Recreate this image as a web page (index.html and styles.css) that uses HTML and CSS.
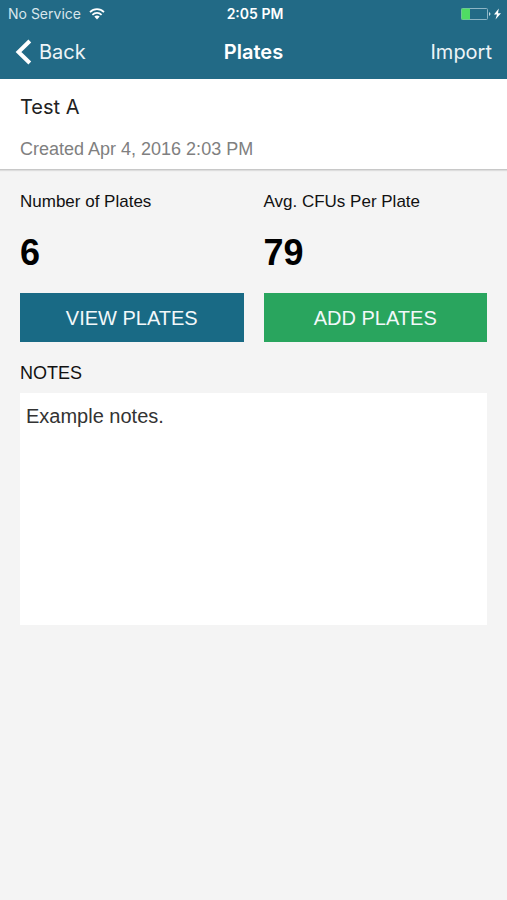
FILE: index.html
```html
<!DOCTYPE html>
<html lang="en">
<head>
    <meta charset="UTF-8">
    <meta name="viewport" content="width=device-width, initial-scale=1.0">
    <title>Plates</title>
    <link rel="stylesheet" href="styles.css">
</head>
<body>
    <header class="header">
        <!-- Status bar -->
        <div class="status-bar">
            <div class="status-left">
                <span>No Service</span>
                <svg class="wifi" width="16" height="12" viewBox="0 0 16 12" aria-hidden="true">
                    <path d="M1 4.2C5 .2 11 .2 15 4.2" fill="none" stroke="#fff" stroke-width="1.7"/>
                    <path d="M3.4 6.8C6 4.2 10 4.2 12.6 6.8" fill="none" stroke="#fff" stroke-width="1.7"/>
                    <path d="M5.3 8.6Q8 6.2 10.7 8.6L8 11.4Z" fill="#fff"/>
                </svg>
            </div>
            <div class="status-time">2:05 PM</div>
            <div class="status-right">
                <svg width="42" height="14" viewBox="0 0 42 14" aria-hidden="true">
                    <rect x="1.5" y="1.5" width="26" height="11" rx="1" fill="none" stroke="#8db5c5"/>
                    <rect x="1.5" y="1.5" width="8.5" height="11" fill="#4fdc63"/>
                    <path d="M29 5Q32 7 29 9Z" fill="#c5dbe3"/>
                    <path d="M38.8 1.5L34 7.6H37L35.5 12.5L41 6.2H38Z" fill="#fff"/>
                </svg>
            </div>
        </div>

        <!-- Navigation -->
        <nav class="nav-bar">
            <a href="#" class="nav-link">
                <svg width="17" height="26" viewBox="0 0 17 26" aria-hidden="true">
                    <path d="M14.8 2L3.5 13L14.8 24" fill="none" stroke="#fff" stroke-width="4"/>
                </svg>
                <span>Back</span>
            </a>
            <h1>Plates</h1>
            <a href="#" class="nav-link nav-import">Import</a>
        </nav>
    </header>

    <section class="test-info">
        <h2>Test A</h2>
        <p>Created Apr 4, 2016 2:03 PM</p>
    </section>

    <main class="content">
        <div class="stats">
            <div class="stat">
                <div class="stat-label">Number of Plates</div>
                <div class="stat-value">6</div>
                <button type="button" class="btn btn-view">VIEW PLATES</button>
            </div>
            <div class="stat">
                <div class="stat-label">Avg. CFUs Per Plate</div>
                <div class="stat-value">79</div>
                <button type="button" class="btn btn-add">ADD PLATES</button>
            </div>
        </div>

        <label for="notes">NOTES</label>
        <textarea id="notes" name="notes">Example notes.</textarea>
    </main>
</body>
</html>
```

FILE: styles.css
```css
body {
    font-family: "Liberation Sans", Arial, sans-serif;
    background-color: #f4f4f4;
    color: #111;
    margin: 0;
}
h1, h2, p {
    margin: 0;
}
.header {
    background-color: #226a86;
    color: #fff;
    font-family: Inter, sans-serif;
    padding-bottom: 3px;
}
.status-bar, .nav-bar {
    display: grid;
    grid-template-columns: 1fr auto 1fr;
    align-items: center;
}
.status-bar {
    height: 27px;
    padding: 0 5px 0 8px;
    font-size: 14px;
}
.status-left {
    display: flex;
    align-items: center;
    gap: 8px;
    color: #d8e6ec;
}
.status-time {
    font-weight: 600;
}
.status-right {
    display: flex;
    justify-content: flex-end;
}
.nav-bar {
    height: 49px;
    padding: 0 15px;
}
.nav-bar h1 {
    font-size: 20px;
    font-weight: 600;
}
.nav-link {
    display: flex;
    align-items: center;
    gap: 7px;
    color: #edf4f7;
    font-size: 20px;
    text-decoration: none;
}
.nav-import {
    justify-content: flex-end;
}
.test-info {
    background-color: #fff;
    padding: 15px 20px 8px;
    border-bottom: 1px solid #c8c8c8;
    box-shadow: 0 1px 1px #ddd;
}
.test-info h2 {
    color: #222;
    font-family: Inter, sans-serif;
    font-size: 20px;
    font-weight: 400;
    line-height: 26px;
}
.test-info p {
    margin-top: 17px;
    color: #808080;
    font-size: 18px;
    line-height: 24px;
}
.content {
    padding: 21px 20px 20px;
}
.stats {
    display: grid;
    grid-template-columns: 1fr 1fr;
    gap: 20px;
}
.stat-label {
    font-size: 17px;
    line-height: 22px;
}
.stat-value {
    margin: 20px 0;
    color: #000;
    font-size: 36px;
    font-weight: bold;
    line-height: 40px;
}
.btn {
    display: block;
    width: 100%;
    height: 49px;
    padding: 0;
    border: none;
    color: #f2f8fa;
    font-family: inherit;
    font-size: 20px;
    line-height: 24px;
    cursor: pointer;
}
.btn-view {
    background-color: #196a85;
}
.btn-add {
    background-color: #29a55e;
}
label {
    display: block;
    margin: 20px 0 9px;
    font-size: 18px;
    line-height: 22px;
}
textarea {
    display: block;
    width: 100%;
    height: 232px;
    padding: 10px 6px;
    border: none;
    box-sizing: border-box;
    background-color: #fff;
    color: #333;
    font-family: inherit;
    font-size: 20px;
    line-height: 26px;
    resize: none;
}
```
